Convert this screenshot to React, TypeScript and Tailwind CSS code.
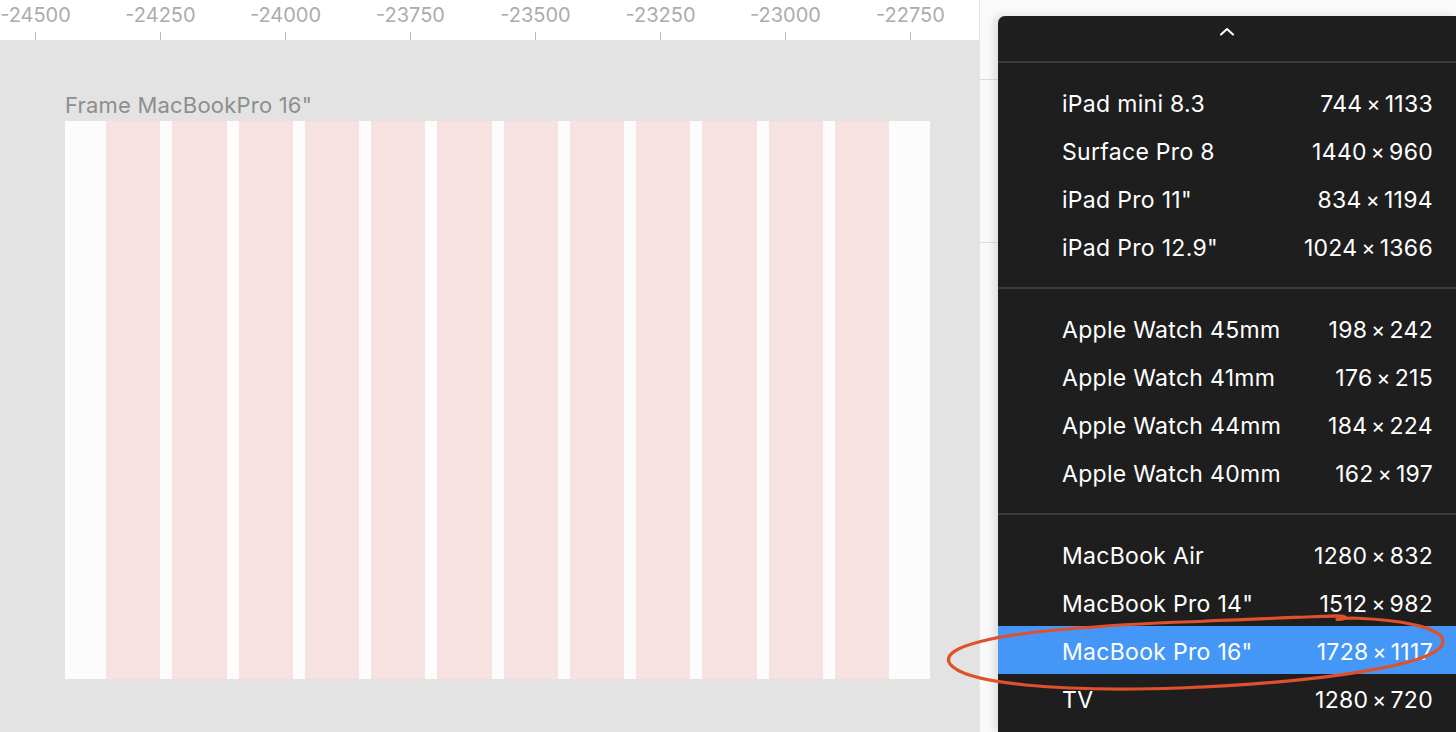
import React from "react";

const rulerLabels = ["-24500", "-24250", "-24000", "-23750", "-23500", "-23250", "-23000", "-22750"];

const sections: [string, string][][] = [
  [
    ["iPad mini 8.3", "744×1133"],
    ["Surface Pro 8", "1440×960"],
    ["iPad Pro 11\"", "834×1194"],
    ["iPad Pro 12.9\"", "1024×1366"],
  ],
  [
    ["Apple Watch 45mm", "198×242"],
    ["Apple Watch 41mm", "176×215"],
    ["Apple Watch 44mm", "184×224"],
    ["Apple Watch 40mm", "162×197"],
  ],
  [
    ["MacBook Air", "1280×832"],
    ["MacBook Pro 14\"", "1512×982"],
    ["MacBook Pro 16\"", "1728×1117"],
    ["TV", "1280×720"],
  ],
];

function Dim({ v }: { v: string }) {
  const [a, b] = v.split("×");
  return (
    <span className="flex items-center">
      <span>{a}</span>
      <span className="mx-[4px] text-[21px]">×</span>
      <span>{b}</span>
    </span>
  );
}

export default function App() {
  return (
    <div
      className="relative w-[1456px] h-[732px] overflow-hidden flex bg-white"
      style={{ fontFamily: "Inter, 'Noto Sans', sans-serif" }}
    >
      {/* Left: ruler + canvas */}
      <div className="w-[980px] flex flex-col border-r border-[#e6e6e6]">
        <div className="h-[40px] bg-white relative flex">
          <div className="flex ml-[-27px]">
            {rulerLabels.map((l) => (
              <div key={l} className="w-[125px] h-[40px] flex flex-col items-center">
                <span className="text-[20px] leading-none mt-[5px] text-[#acacac]">{l}</span>
                <span className="mt-auto w-px h-[8px] bg-[#b8b8b8]" />
              </div>
            ))}
          </div>
        </div>
        <div className="flex-1 bg-[#e3e3e3] pl-[65px] pt-[54px]">
          <div className="text-[22px] leading-none text-[#8e8e8e] mb-[5px] tracking-[0.2px]">Frame MacBookPro 16"</div>
          <div className="w-[865px] h-[558px] bg-[#fcfcfc] px-[41px] grid grid-cols-12 gap-x-[12px]">
            {Array.from({ length: 12 }).map((_, i) => (
              <div key={i} className="bg-[#f7e1e1]" />
            ))}
          </div>
        </div>
      </div>
      {/* Right panel behind menu */}
      <div className="flex-1 bg-[#fafafa] flex flex-col">
        <div className="h-[80px] border-b border-[#dedede]" />
        <div className="h-[163px] border-b border-[#dedede]" />
      </div>

      {/* Dropdown menu */}
      <div className="absolute left-[998px] top-[16px] w-[458px] h-[716px] bg-[#1e1e1e] rounded-tl-[7px] shadow-[-4px_0_10px_rgba(0,0,0,0.12)] text-white">
        <div className="h-[47px] flex items-start justify-center pt-[11px] border-b-2 border-[#3b3b3b]">
          <svg width="16" height="9" viewBox="0 0 16 9">
            <polyline points="2,7.5 8,2 14,7.5" fill="none" stroke="#ffffff" strokeWidth="2" strokeLinecap="round" strokeLinejoin="round" />
          </svg>
        </div>
        {sections.map((sec, si) => (
          <div key={si} className={`pt-[15px] pb-[17px] ${si < 2 ? "border-b-2 border-[#3b3b3b]" : ""}`}>
            {sec.map(([name, dim]) => {
              const sel = name === "MacBook Pro 16\"";
              return (
                <div
                  key={name}
                  className={`h-[48px] flex items-center justify-between pt-[4px] pl-[64px] pr-[23px] text-[23px] tracking-[0.3px] ${sel ? "bg-[#4597f7]" : ""}`}
                >
                  <span>{name}</span>
                  <Dim v={dim} />
                </div>
              );
            })}
          </div>
        ))}
      </div>

      {/* Hand-drawn annotation */}
      <svg className="absolute left-0 top-0 pointer-events-none" width="1456" height="732" viewBox="0 0 1456 732">
        <path
          d="M 1205 621 C 1300 618, 1340 614, 1345 617 C 1350 620, 1320 620, 1352 618 C 1410 620, 1450 630, 1442 645 C 1432 664, 1330 682, 1180 688 C 1060 692, 965 684, 950 664 C 938 646, 1000 634, 1080 628 C 1130 624, 1180 622, 1210 621"
          fill="none"
          stroke="#e0502c"
          strokeWidth="3.2"
          strokeLinecap="round"
          strokeLinejoin="round"
        />
      </svg>
    </div>
  );
}
